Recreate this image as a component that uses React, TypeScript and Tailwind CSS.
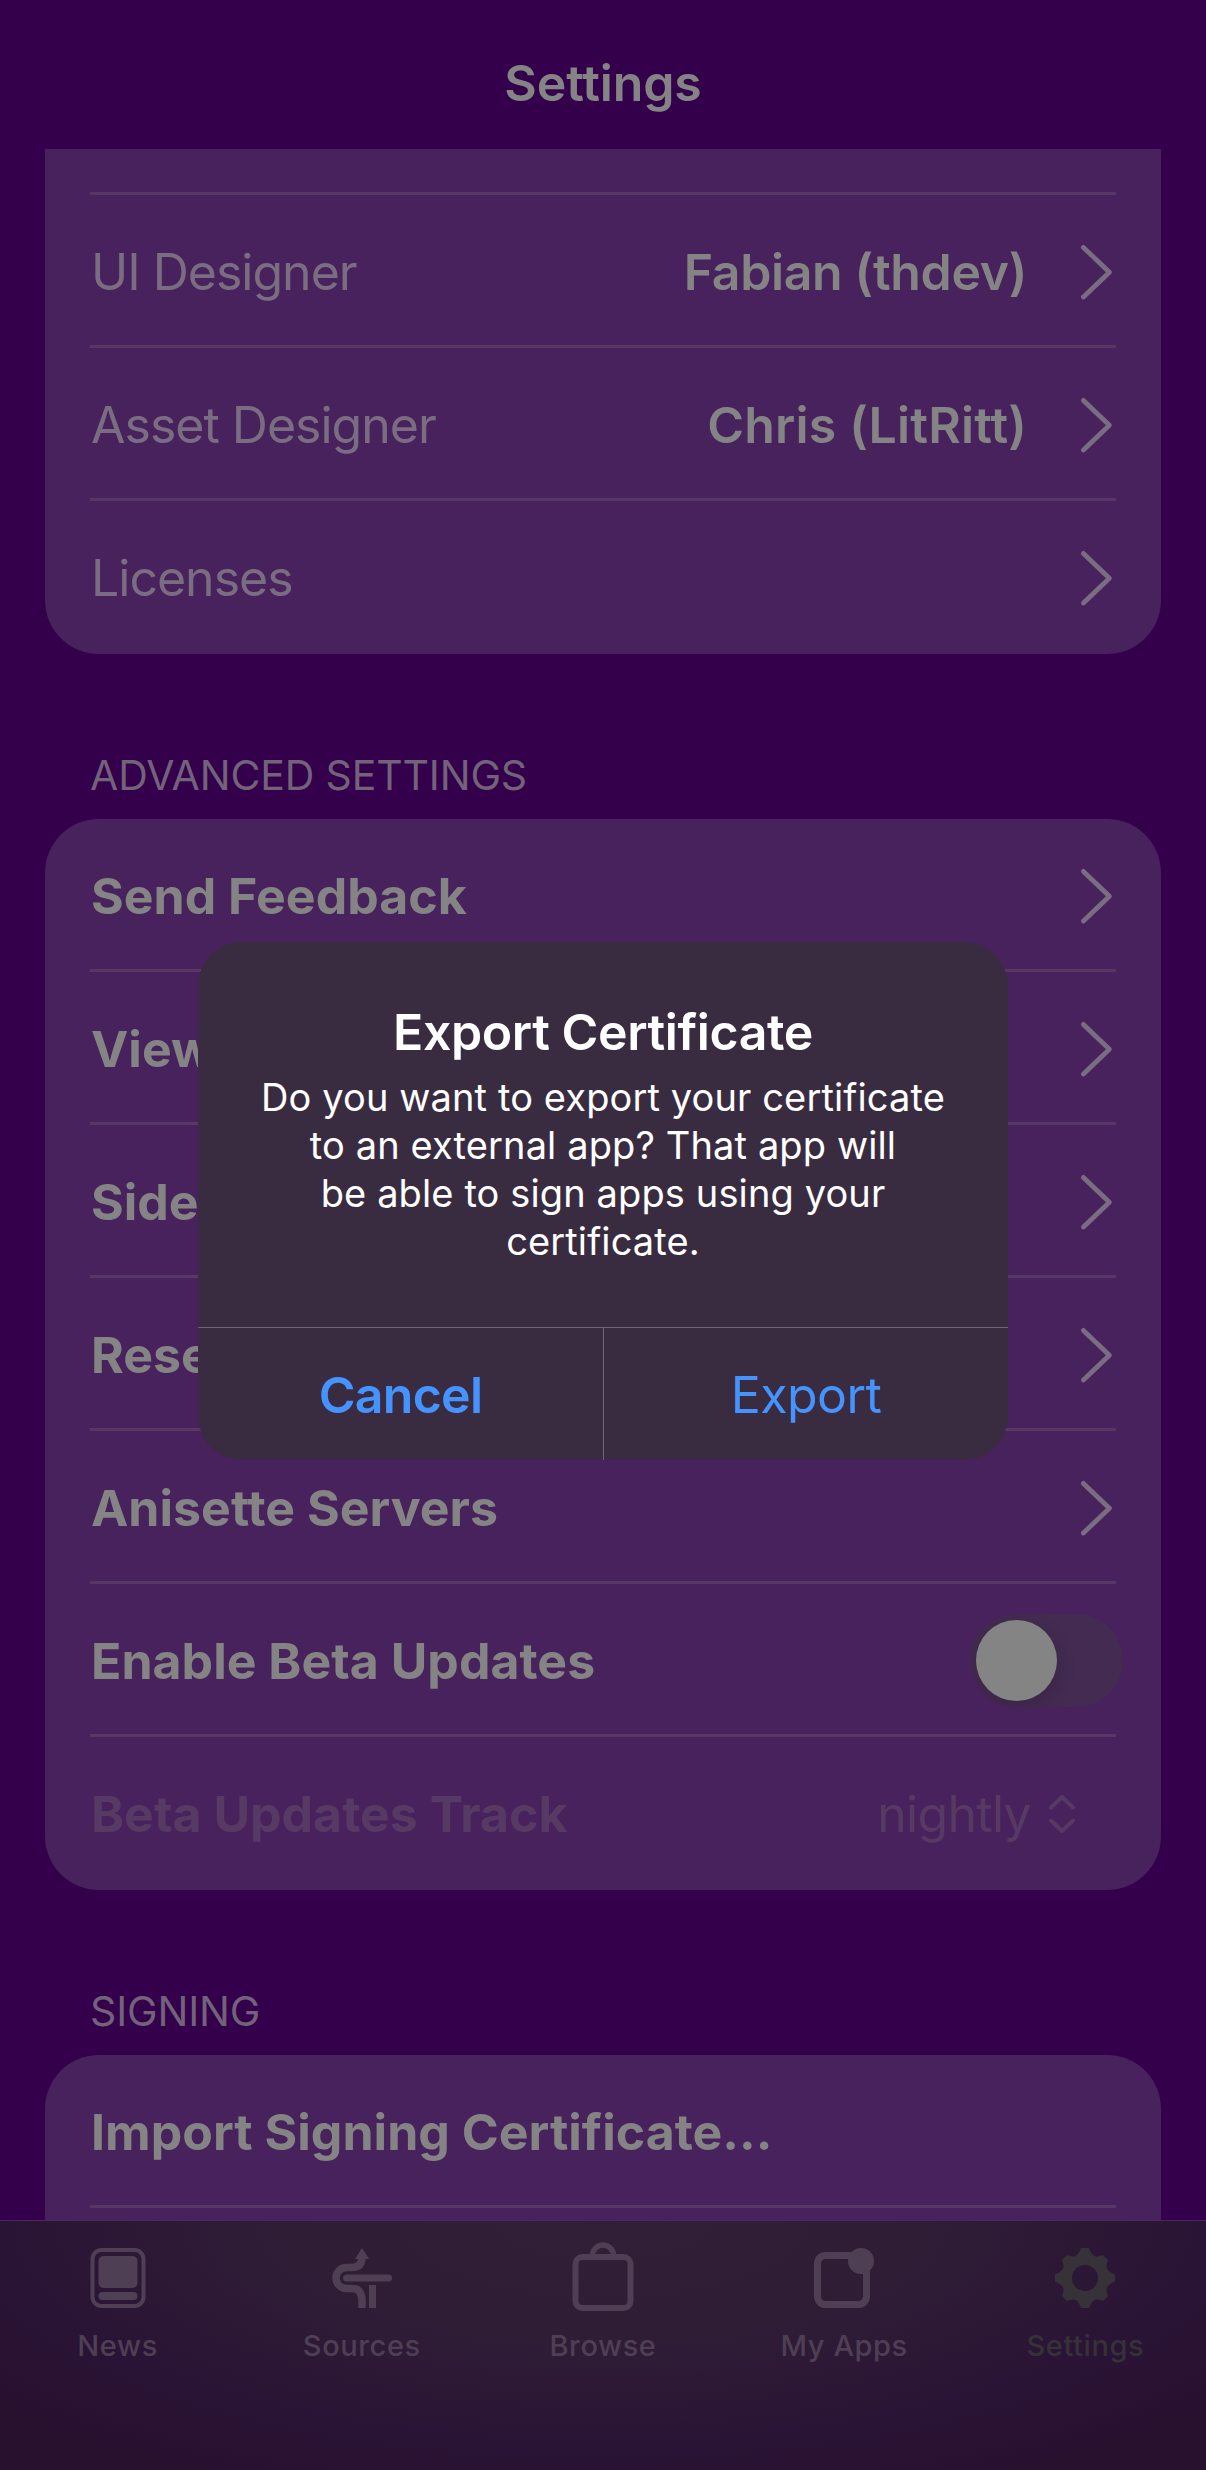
import React from 'react';
import type { ReactNode } from 'react';

function Chevron() {
  return (
    <svg width="36" height="60" viewBox="0 0 36 60" fill="none" className="shrink-0 text-[#7b6d81]">
      <path d="M3.400 5.400 L29.400 30.200 L3.400 55" stroke="currentColor" strokeWidth="4.8" strokeLinecap="round" strokeLinejoin="round" />
    </svg>
  );
}

function Toggle() {
  return (
    <div className="-mr-[7px] flex h-[93px] w-[153px] items-center overflow-hidden rounded-full bg-[#432b51] px-[6px]">
      <div className="h-[81px] w-[81px] rounded-full bg-[#848484] shadow-[0_6px_20px_rgba(0,0,0,0.14)]" />
    </div>
  );
}

function Row({ children, last = false }: { children: ReactNode; last?: boolean }) {
  return (
    <div
      className={`flex h-[153px] items-center justify-between border-b-[3px] pt-[3px] ${
        last ? 'border-transparent' : 'border-[#573864]'
      }`}
    >
      {children}
    </div>
  );
}

function RowLabel({ children, disabled = false }: { children: ReactNode; disabled?: boolean }) {
  return (
    <span className={`pt-[2px] pl-[1px] text-[50px] font-bold tracking-[0.02px] ${disabled ? 'text-[#573a64]' : ''}`}>
      {children}
    </span>
  );
}

function SectionTitle({ children }: { children: ReactNode }) {
  return (
    <h2 className="flex h-[165px] items-center pt-[78px] pl-[45px] text-[41px] tracking-[-0.15px] text-[#72627a]">
      {children}
    </h2>
  );
}

const credits = [
  { label: 'UI Designer', value: 'Fabian (thdev)', tracking: 'tracking-[-0.35px]' },
  { label: 'Asset Designer', value: 'Chris (LitRitt)', tracking: 'tracking-[0.15px]' },
  { label: 'Licenses' },
];

const advanced = ['Send Feedback', 'View', 'Side', 'Rese', 'Anisette Servers'];

const tabs = [
  {
    name: 'News',
    icon: (
      <>
        <rect x="4.500" y="2" width="51" height="56" rx="9" fill="none" stroke="currentColor" strokeWidth="4" />
        <rect x="10.500" y="8" width="39" height="32" rx="5" />
        <rect x="10.500" y="44" width="39" height="8" rx="4" />
      </>
    ),
  },
  {
    name: 'Sources',
    icon: (
      <>
        <g fill="none" stroke="currentColor" strokeWidth="7.5">
          <path d="M30 60 V53 Q30 40.500 20 40.500 H14.500 A10.500 10.500 0 0 1 14.500 19.500 H20 Q30 19.500 30 9" />
          <path d="M14.500 30 H56.500" strokeWidth="7" strokeLinecap="round" />
          <path d="M40.500 37 V60" strokeWidth="7" />
        </g>
        <path d="M30 0 L37 11 H23 Z" />
      </>
    ),
  },
  {
    name: 'Browse',
    icon: (
      <g fill="none" stroke="currentColor" strokeWidth="6">
        <rect x="2.500" y="9" width="55" height="51" rx="7" />
        <path d="M19.500 8 V7.500 A10.500 10.500 0 0 1 40.500 7.500 V8" strokeWidth="5.5" />
      </g>
    ),
  },
  {
    name: 'My Apps',
    icon: (
      <>
        <rect x="3.500" y="7.500" width="49" height="49" rx="8" fill="none" stroke="currentColor" strokeWidth="7" />
        <circle cx="47" cy="13" r="13" />
      </>
    ),
  },
  {
    name: 'Settings',
    icon: (
      <path
        fillRule="evenodd"
        d="M26 0 H34 Q36.500 7 40 8.300 Q43 9 48 7 L53 12 Q51 17 51.700 20 Q53 23.500 60 26.500 V33.500 Q53 36.500 51.700 40 Q51 43 53 48 L48 53 Q43 51 40 51.700 Q36.500 53 34 60 H26 Q23.500 53 20 51.700 Q17 51 12 53 L7 48 Q9 43 8.300 40 Q7 36.500 0 33.500 V26.500 Q7 23.500 8.300 20 Q9 17 7 12 L12 7 Q17 9 20 8.300 Q23.500 7 26 0 Z M30 17 A13 13 0 1 0 30 43 A13 13 0 1 0 30 17 Z"
      />
    ),
  },
];

function TabBar() {
  return (
    <nav className="h-[250px] border-t border-[#4b2a57] bg-[#291032] bg-[radial-gradient(ellipse_700px_260px_at_50%_0%,#301f36_0%,#2f1d36_45%,#2a1435_85%,#28102f_115%)]">
      <div className="grid grid-cols-5 pt-[27px]">
        {tabs.map((tab) => (
          <div
            key={tab.name}
            className={`flex flex-col items-center first:pr-[6px] ${
              tab.name === 'Settings' ? 'text-[#373138]' : 'text-[#4f3f54]'
            }`}
          >
            <svg width="60" height="60" viewBox="0 0 60 60" fill="currentColor" className="overflow-visible">
              {tab.icon}
            </svg>
            <span className="mt-[20px] text-[29px] leading-[36px] font-medium tracking-[0.6px]">{tab.name}</span>
          </div>
        ))}
      </div>
    </nav>
  );
}

function ExportAlert() {
  return (
    <div
      role="alertdialog"
      className="absolute top-[942px] left-[198px] flex h-[518px] w-[810px] flex-col overflow-hidden rounded-[44px] bg-[#3a2c40] text-center text-white"
    >
      <div className="h-[385px] pt-[60px]">
        <h3 className="text-[50px] leading-[60px] font-semibold tracking-[-0.4px]">Export Certificate</h3>
        <p className="mt-[11px] text-[38px] leading-[48px] tracking-[0.12px]">
          Do you want to export your certificate
          <br />
          to an external app? That app will
          <br />
          be able to sign apps using your
          <br />
          certificate.
        </p>
      </div>
      <div className="flex h-[133px] border-t border-[#725e7d] text-[50px] text-[#4593ff]">
        <button className="w-[405px] pt-[3px] font-semibold tracking-[-0.7px]">Cancel</button>
        <button className="w-[405px] border-l border-[#725e7d] pt-[3px] tracking-[-0.6px]">Export</button>
      </div>
    </div>
  );
}

export default function App() {
  return (
    <div className="relative flex h-[2470px] w-[1206px] flex-col overflow-hidden bg-[#34004c] font-['Inter','Liberation_Sans',sans-serif] text-[#848484]">
      <header className="flex h-[149px] shrink-0 items-center justify-center pt-[17px]">
        <h1 className="text-[50px] font-semibold tracking-[-0.1px]">Settings</h1>
      </header>

      <main className="h-[2071px] shrink-0 overflow-hidden px-[45px]">
        <div className="rounded-b-[54px] bg-[#48225c] px-[45px]">
          <div className="h-[46px] border-b-[3px] border-[#573864]" />
          {credits.map((item, i) => (
            <Row key={item.label} last={i === credits.length - 1}>
              <span className="pt-[2px] pl-[1px] text-[50px] tracking-[-1px] text-[#7b6d81]">{item.label}</span>
              <div className="flex items-center gap-[53px]">
                {item.value && (
                  <span className={`pt-[2px] text-[50px] font-semibold ${item.tracking}`}>{item.value}</span>
                )}
                <Chevron />
              </div>
            </Row>
          ))}
        </div>

        <SectionTitle>ADVANCED SETTINGS</SectionTitle>
        <div className="rounded-[54px] bg-[#48225c] px-[45px]">
          {advanced.map((label) => (
            <Row key={label}>
              <RowLabel>{label}</RowLabel>
              <Chevron />
            </Row>
          ))}
          <Row>
            <RowLabel>Enable Beta Updates</RowLabel>
            <Toggle />
          </Row>
          <Row last>
            <RowLabel disabled>Beta Updates Track</RowLabel>
            <div className="flex items-center gap-[18px] pr-[41px] text-[#573a64]">
              <span className="pt-[2px] text-[50px] tracking-[-0.7px]">nightly</span>
              <svg width="26" height="38" viewBox="0 0 26 38" fill="none" stroke="currentColor" strokeWidth="4" strokeLinecap="round" strokeLinejoin="round">
                <path d="M2 12.500 L13 2 L24 12.500 M2 25.500 L13 36 L24 25.500" />
              </svg>
            </div>
          </Row>
        </div>

        <SectionTitle>SIGNING</SectionTitle>
        <div className="rounded-t-[54px] bg-[#48225c] px-[45px]">
          <Row>
            <RowLabel>Import Signing Certificate...</RowLabel>
          </Row>
          <div className="h-[153px]" />
        </div>
      </main>

      <TabBar />
      <ExportAlert />
    </div>
  );
}
